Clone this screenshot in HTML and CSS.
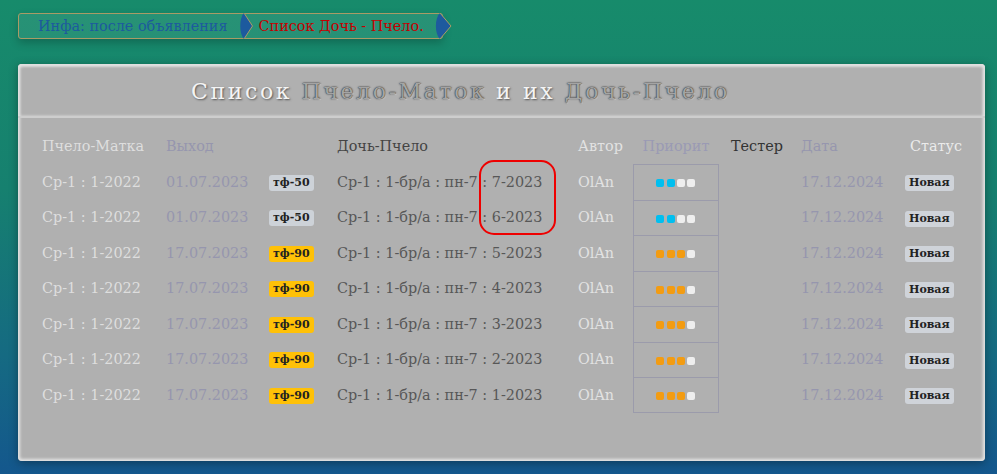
FILE: index.html
```html
<!DOCTYPE html>
<html lang="ru">
<head>
<meta charset="utf-8">
<title>Список Дочь - Пчело</title>
<link rel="stylesheet" href="styles.css">
</head>
<body>
<nav class="crumbs">
  <div class="crumb crumb-first">
    <span class="crumb-text blue">Инфа: после объявления</span>
    <svg class="arrow" width="14" height="26" viewBox="0 0 14 26"><path d="M5 0 L13.5 13 L5 26 C0 21 0 5 5 0 Z" fill="#1d5a9e"/><path d="M5 0 L13.5 13 L5 26" fill="none" stroke="#a99b66" stroke-width="1"/></svg>
  </div>
  <div class="crumb crumb-last">
    <span class="crumb-text red">Список Дочь - Пчело.</span>
    <svg class="arrow" width="18" height="26" viewBox="0 0 18 26"><path d="M6 0 L17 13 L6 26 C0.5 21 0.5 5 6 0 Z" fill="#1d5a9e"/><path d="M6 0 L17 13 L6 26" fill="none" stroke="#a99b66" stroke-width="1"/></svg>
  </div>
</nav>

<section class="panel">
  <header class="panel-head">
    <h1 class="title"><span class="t-white">Список</span> <span class="t-emb">Пчело-Маток</span> <span class="t-white">и их</span> <span class="t-emb">Дочь-Пчело</span></h1>
  </header>
  <div class="table">
    <div class="row head">
      <div class="c c1">Пчело-Матка</div>
      <div class="c c2">Выход</div>
      <div class="c c3"></div>
      <div class="c c4">Дочь-Пчело</div>
      <div class="c c5">Автор</div>
      <div class="c c6 nob">Приорит</div>
      <div class="c c7">Тестер</div>
      <div class="c c8">Дата</div>
      <div class="c c9">Статус</div>
    </div>

    <div class="row">
      <div class="c c1">Ср-1 : 1-2022</div>
      <div class="c c2">01.07.2023</div>
      <div class="c c3"><span class="tag grey">тф-50</span></div>
      <div class="c c4">Ср-1 : 1-бр/а : пн-7 : 7-2023</div>
      <div class="c c5">OlAn</div>
      <div class="c c6"><span class="sq b"></span><span class="sq b"></span><span class="sq w"></span><span class="sq w"></span></div>
      <div class="c c7"></div>
      <div class="c c8">17.12.2024</div>
      <div class="c c9"><span class="tag st">Новая</span></div>
    </div>
    <div class="row">
      <div class="c c1">Ср-1 : 1-2022</div>
      <div class="c c2">01.07.2023</div>
      <div class="c c3"><span class="tag grey">тф-50</span></div>
      <div class="c c4">Ср-1 : 1-бр/а : пн-7 : 6-2023</div>
      <div class="c c5">OlAn</div>
      <div class="c c6"><span class="sq b"></span><span class="sq b"></span><span class="sq w"></span><span class="sq w"></span></div>
      <div class="c c7"></div>
      <div class="c c8">17.12.2024</div>
      <div class="c c9"><span class="tag st">Новая</span></div>
    </div>
    <div class="row">
      <div class="c c1">Ср-1 : 1-2022</div>
      <div class="c c2">17.07.2023</div>
      <div class="c c3"><span class="tag yel">тф-90</span></div>
      <div class="c c4">Ср-1 : 1-бр/а : пн-7 : 5-2023</div>
      <div class="c c5">OlAn</div>
      <div class="c c6"><span class="sq o"></span><span class="sq o"></span><span class="sq o"></span><span class="sq w"></span></div>
      <div class="c c7"></div>
      <div class="c c8">17.12.2024</div>
      <div class="c c9"><span class="tag st">Новая</span></div>
    </div>
    <div class="row">
      <div class="c c1">Ср-1 : 1-2022</div>
      <div class="c c2">17.07.2023</div>
      <div class="c c3"><span class="tag yel">тф-90</span></div>
      <div class="c c4">Ср-1 : 1-бр/а : пн-7 : 4-2023</div>
      <div class="c c5">OlAn</div>
      <div class="c c6"><span class="sq o"></span><span class="sq o"></span><span class="sq o"></span><span class="sq w"></span></div>
      <div class="c c7"></div>
      <div class="c c8">17.12.2024</div>
      <div class="c c9"><span class="tag st">Новая</span></div>
    </div>
    <div class="row">
      <div class="c c1">Ср-1 : 1-2022</div>
      <div class="c c2">17.07.2023</div>
      <div class="c c3"><span class="tag yel">тф-90</span></div>
      <div class="c c4">Ср-1 : 1-бр/а : пн-7 : 3-2023</div>
      <div class="c c5">OlAn</div>
      <div class="c c6"><span class="sq o"></span><span class="sq o"></span><span class="sq o"></span><span class="sq w"></span></div>
      <div class="c c7"></div>
      <div class="c c8">17.12.2024</div>
      <div class="c c9"><span class="tag st">Новая</span></div>
    </div>
    <div class="row">
      <div class="c c1">Ср-1 : 1-2022</div>
      <div class="c c2">17.07.2023</div>
      <div class="c c3"><span class="tag yel">тф-90</span></div>
      <div class="c c4">Ср-1 : 1-бр/а : пн-7 : 2-2023</div>
      <div class="c c5">OlAn</div>
      <div class="c c6"><span class="sq o"></span><span class="sq o"></span><span class="sq o"></span><span class="sq w"></span></div>
      <div class="c c7"></div>
      <div class="c c8">17.12.2024</div>
      <div class="c c9"><span class="tag st">Новая</span></div>
    </div>
    <div class="row last">
      <div class="c c1">Ср-1 : 1-2022</div>
      <div class="c c2">17.07.2023</div>
      <div class="c c3"><span class="tag yel">тф-90</span></div>
      <div class="c c4">Ср-1 : 1-бр/а : пн-7 : 1-2023</div>
      <div class="c c5">OlAn</div>
      <div class="c c6"><span class="sq o"></span><span class="sq o"></span><span class="sq o"></span><span class="sq w"></span></div>
      <div class="c c7"></div>
      <div class="c c8">17.12.2024</div>
      <div class="c c9"><span class="tag st">Новая</span></div>
    </div>

    <div class="mark"></div>
  </div>
</section>
</body>
</html>
```

FILE: styles.css
```css
html, body {
  margin: 0;
  height: 100%;
}
body {
  background: linear-gradient(to bottom, #178b6b 0%, #16806f 40%, #156a82 75%, #14578d 100%);
  font-family: "DejaVu Serif", serif;
  padding: 13px 0 0 18px;
  box-sizing: border-box;
  overflow: hidden;
}

/* breadcrumbs */
.crumbs {
  display: flex;
  align-items: center;
  height: 26px;
  box-sizing: border-box;
  border: 1px solid #a99b66;
  border-radius: 3px;
  background: rgba(255, 255, 255, 0.07);
  box-shadow: 0 4px 8px rgba(0, 0, 0, 0.22);
  padding-left: 19px;
  width: 425px;
}
.crumb {
  display: flex;
  align-items: center;
  height: 26px;
}
.crumb-text {
  font-size: 14.4px;
  line-height: 26px;
  white-space: nowrap;
}
.blue { color: #1d5a9e; }
.red { color: #c40000; }
.arrow {
  display: block;
  flex: none;
}
.crumb-first .arrow { margin: 0 6px 0 11px; }
.crumb-last .arrow { margin: 0 0 0 10px; }

/* panel */
.panel {
  position: relative;
  margin-top: 25px;
  width: 967px;
  height: 397px;
  box-sizing: border-box;
  background: #b0b0b0;
  border-radius: 4px;
  box-shadow: inset 0 0 3px 2px #e4e4e4, 0 2px 10px rgba(0, 0, 0, 0.35);
}
.panel-head {
  height: 52px;
  border-bottom: 2px solid #cdcdcd;
  box-shadow: inset 0 1px 3px 1px #e0e0e0;
  border-radius: 4px 4px 0 0;
  padding-left: 173px;
  display: flex;
  align-items: center;
}
.title {
  margin: 0;
  font-weight: normal;
  font-size: 22px;
  letter-spacing: 2.6px;
  white-space: nowrap;
  padding-top: 2px;
}
.t-white {
  color: #f4f4f4;
  text-shadow: 1px 1px 2px #555;
}
.t-emb {
  color: #a4a4a4;
  text-shadow: 0 0 2px #222, 0 0 1px #444, 1px 1px 1px #ddd;
}

/* table */
.table {
  position: relative;
  padding-top: 10px;
}
.row {
  display: flex;
  align-items: center;
  height: 35.5px;
  font-size: 14.4px;
}
.row.head { height: 36px; }
.c {
  flex: none;
  white-space: nowrap;
  box-sizing: border-box;
  height: 100%;
  display: flex;
  align-items: center;
}
.c1 { width: 148px; padding-left: 24px; color: #dedede; }
.c2 { width: 103px; color: #9696ae; }
.c3 { width: 68px; }
.c4 { width: 241px; color: #575757; }
.c5 { width: 55px; color: #e2e2e2; }
.c6 {
  width: 86px;
  justify-content: center;
  border: 1px solid #9b9bab;
  border-bottom: none;
  gap: 2px;
  padding-top: 2px;
}
.c6.nob { border: none; color: #9a9ab4; padding-top: 0; }
.row.last .c6 { border-bottom: 1px solid #9b9bab; }
.c7 { width: 82px; padding-left: 12px; color: #333; }
.c8 { width: 104px; color: #9696ae; }
.c9 { width: 70px; color: #ebebeb; }
.head .c4 { color: #444; }
.head .c9 { padding-left: 5px; }

.tag {
  display: inline-block;
  font-weight: bold;
  font-size: 11px;
  line-height: 16px;
  padding: 0 4px;
  border-radius: 3px;
  color: #222;
  margin-top: 2px;
}
.grey { background: #cdd2d8; }
.yel { background: #ffc107; }
.st { background: #cfd3d9; font-size: 11px; padding: 0 4px; margin-top: 3px; }

.sq {
  width: 8px;
  height: 8px;
  border-radius: 2px;
  margin-right: 0.3px;
}
.sq.b { background: #00bff0; }
.sq.w { background: #eeeeee; }
.sq.o { background: #f39c12; }

.mark {
  position: absolute;
  left: 461px;
  top: 42px;
  width: 77px;
  height: 75px;
  box-sizing: border-box;
  border: 2px solid #ee0000;
  border-radius: 15px;
}
```
